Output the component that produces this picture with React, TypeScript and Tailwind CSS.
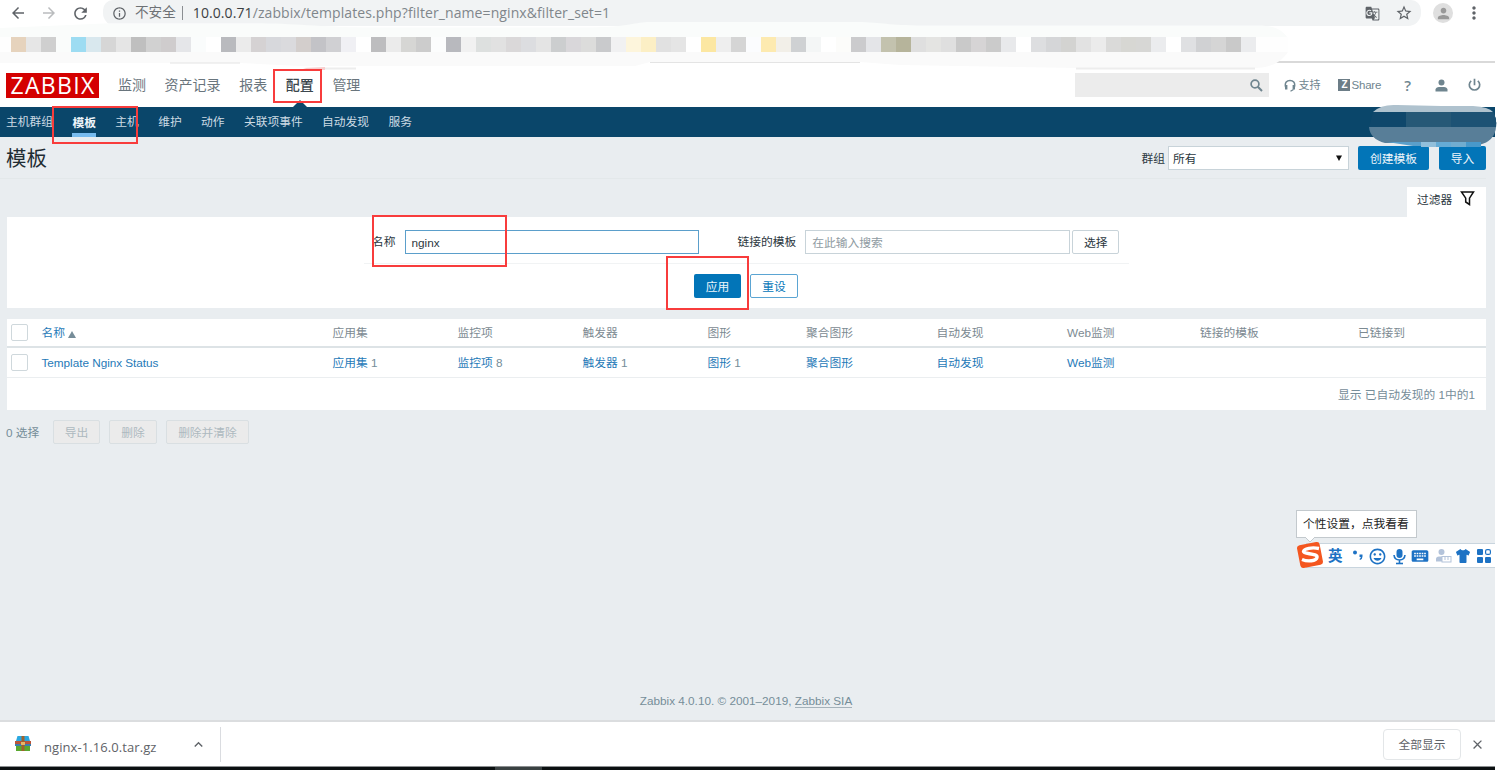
import type { ReactNode } from "react";
import {
  MdArrowBack,
  MdArrowForward,
  MdClose,
  MdExpandLess,
  MdGTranslate,
  MdInfoOutline,
  MdKeyboard,
  MdMic,
  MdMoreVert,
  MdOutlineInsertEmoticon,
  MdPerson,
  MdRefresh,
  MdStarBorder,
} from "react-icons/md";
import { FaTshirt } from "react-icons/fa";

const bookmarkTiles = [
  "bg-[#e6d3bd]", "bg-[#e6e6e6]", "bg-[#cfcfcf]", "bg-[#fafcfb]", "bg-[#9ddcf2]", "bg-[#d9e8ee]",
  "bg-[#d6d6d6]", "bg-[#e5e5e5]", "bg-[#bfbfbf]", "bg-[#d1d1d1]", "bg-[#cfcccd]", "bg-[#e5e6e9]",
  "bg-[#fafcfc]", "bg-white", "bg-[#b9babe]", "bg-[#ebebeb]", "bg-[#d5d2d3]", "bg-[#d7d8dc]",
  "bg-[#dadadd]", "bg-[#d3cecc]", "bg-[#c3c3c7]", "bg-[#d0d0d3]", "bg-[#f0f0f4]", "bg-white",
  "bg-[#bdbdbf]", "bg-[#ebebeb]", "bg-[#d6d6d4]", "bg-[#cccccc]", "bg-[#fcfdfd]", "bg-[#b8b9be]",
  "bg-[#f1f1f1]", "bg-[#dde0df]", "bg-[#e1e1e1]", "bg-[#dad8d9]", "bg-[#dcdde0]", "bg-[#e4e4e4]",
  "bg-[#cccecf]", "bg-[#d9d7da]", "bg-[#dcdcdb]", "bg-[#c9cacc]", "bg-[#f1f1f2]", "bg-[#fdf5dc]",
  "bg-[#fcefc5]", "bg-[#e1e1e1]", "bg-[#e5e5e5]", "bg-white", "bg-[#fce7a2]", "bg-[#eeeeee]",
  "bg-[#d5d5d5]", "bg-[#fbfcfe]", "bg-[#fdeab0]", "bg-[#f2efe8]", "bg-[#cfd1d3]", "bg-[#f4f6f6]",
  "bg-white", "bg-[#fcfcfa]", "bg-[#cbcbcd]", "bg-[#e4e5e8]", "bg-[#c3c2ae]", "bg-[#b6b49b]",
  "bg-[#dfdfdf]", "bg-[#e4e4e2]", "bg-[#dfdfdf]", "bg-[#c9c9c9]", "bg-[#d6d4d5]", "bg-[#cbcbcb]",
  "bg-[#e8e9eb]", "bg-white", "bg-[#dddee0]", "bg-[#d5d6d8]", "bg-[#d3d3d1]", "bg-[#e2e2e2]",
  "bg-[#ebebeb]", "bg-[#dadad9]", "bg-[#d7d7d3]", "bg-[#d7d7d5]", "bg-[#ebecee]", "bg-white",
  "bg-[#dfe0e2]", "bg-[#d0d1d3]", "bg-[#d5d5d5]", "bg-[#c9c9c9]", "bg-[#ebecee]",
];

const mainMenu = ["监测", "资产记录", "报表", "配置", "管理"];
const subMenu = ["主机群组", "模板", "主机", "维护", "动作", "关联项事件", "自动发现", "服务"];

const columns = ["应用集", "监控项", "触发器", "图形", "聚合图形", "自动发现", "Web监测", "链接的模板", "已链接到"];
const cells: { label: string; count?: number }[] = [
  { label: "应用集", count: 1 },
  { label: "监控项", count: 8 },
  { label: "触发器", count: 1 },
  { label: "图形", count: 1 },
  { label: "聚合图形" },
  { label: "自动发现" },
  { label: "Web监测" },
];

const rowGrid =
  "grid grid-cols-[34.5px_291px_125px_125px_125px_98.5px_130.5px_130.5px_133px_158px_1fr] items-center";

function Checkbox() {
  return <span className="ml-1 block h-[17px] w-[17px] rounded-[2px] border border-[#cfd8dc] bg-white" />;
}

function BrowserBar() {
  return (
    <div className="flex h-[26px] items-center text-[#5f6368]">
      <MdArrowBack className="ml-[9px] h-[18px] w-[18px]" />
      <MdArrowForward className="ml-[13px] h-[18px] w-[18px] text-[#babcbe]" />
      <MdRefresh className="ml-[13px] h-[19px] w-[19px]" />
      <div className="ml-[13px] flex h-[26px] w-[1318px] items-center rounded-b-[13px] rounded-t-[10px] bg-[#f1f3f4]">
        <MdInfoOutline className="ml-[9px] h-[15px] w-[15px]" />
        <span className="ml-2 text-[13.6px] leading-[26px] text-[#6d7175]">不安全</span>
        <span className="ml-[6px] h-[14px] w-px bg-[#8b8e92]" />
        <span className="ml-[10px] whitespace-nowrap font-['Open_Sans','Noto_Sans',sans-serif] text-[14px] leading-[26px] tracking-[0.09px] text-[#80868b]">
          <span className="text-[#3c4043]">10.0.0.71</span>/zabbix/templates.php?filter_name=nginx&amp;filter_set=1
        </span>
        <MdGTranslate className="ml-auto h-[15px] w-[15px]" />
        <MdStarBorder className="ml-[15px] mr-[8px] h-[18px] w-[18px]" />
      </div>
      <span className="ml-3 flex h-5 w-5 items-center justify-center rounded-full bg-[#dfdfdf] text-[#999]">
        <MdPerson className="h-[17px] w-[17px]" />
      </span>
      <MdMoreVert className="ml-[11px] h-[20px] w-[20px]" />
    </div>
  );
}

function BookmarkBar() {
  return (
    <div className="relative h-[37px]">
      <svg className="absolute left-0 top-[-4px]" width="1500" height="50" viewBox="0 22 1500 50">
        <path d="M1260 62H1495" stroke="#d9d9d9" strokeWidth="2" />
        <path
          d="M110 23.3H250C290 23 320 27 365 27.5H590C630 27 635 22 650 22H862C885 23 890 25.5 930 25.5H1255C1275 25 1282 30 1288 38H0V28Z"
          fill="#fafcfb"
        />
        <path d="M0 37H1288V52H0Z" fill="#fefefe" />
        <path d="M0 52H1288C1280 64 1268 68 1255 68H1076L900 65L860 62H650L635 66H300L240 63H0Z" fill="#fafafa" />
        <path d="M170 63H240M650 62.5H860" stroke="#e4e4e4" />
        <path d="M303 68L325 67V70H310Z" fill="#f6cfcf" />
        <path d="M325 68.5H356M1076 68.5H1255" stroke="#ededed" strokeWidth="2" />
      </svg>
      <div className="relative ml-[11px] flex pt-[11px]">
        {bookmarkTiles.map((tile, i) => (
          <span key={i} className={`h-[15px] w-[15px] shrink-0 ${tile}`} />
        ))}
      </div>
    </div>
  );
}

function Header() {
  return (
    <header className="flex h-[44px] w-[1495px] items-center text-[#6f858f]">
      <div className="ml-[6px] flex h-[25px] w-[93px] items-center justify-center bg-[#d40000] pl-px font-['Open_Sans','Noto_Sans',sans-serif] text-[23px] leading-[25px] tracking-[1.3px] text-white">
        ZABBIX
      </div>
      <nav className="ml-[19px] flex gap-[18.6px] text-[14px] leading-[20px]">
        {mainMenu.map((item) => (
          <span key={item} className={item === "配置" ? "font-medium text-[#3c474e]" : "text-[#69757d]"}>
            {item}
          </span>
        ))}
      </nav>
      <div className="ml-auto flex h-[24px] w-[194px] items-center justify-end bg-[#ececec] pr-[6px]">
        <svg width="13" height="13" viewBox="0 0 13 13" fill="none" stroke="currentColor">
          <circle cx="5" cy="5" r="3.9" strokeWidth="1.7" />
          <path d="M7.8 7.8L12 12" strokeWidth="2" />
        </svg>
      </div>
      <div className="ml-[15px] flex w-[37px] items-center gap-[2px] text-[11px]">
        <svg width="12" height="13" viewBox="0 0 12 13" fill="none" stroke="currentColor" className="shrink-0">
          <path d="M1.6 8C.4 3.6 3 1.4 6 1.4S11.600 3.600 10.400 8" strokeWidth="1.5" />
          <path d="M2.200 6v4.500M9.800 6v4.500" strokeWidth="2.400" />
          <path d="M9.5 10.500L6.500 12.200" strokeWidth="1.300" />
        </svg>
        <span className="whitespace-nowrap">支持</span>
      </div>
      <div className="ml-[17px] flex items-center gap-px text-[11.5px]">
        <span className="flex h-3 w-3 items-center justify-center bg-[#6c7d87] text-[10px] font-bold leading-3 text-white">Z</span>
        <span className="tracking-[-0.2px]">Share</span>
      </div>
      <span className="ml-[23px] font-['Open_Sans','Noto_Sans',sans-serif] text-[15px] font-semibold leading-[20px]">?</span>
      <svg className="ml-[24px]" width="13" height="13" viewBox="0 0 13 13" fill="currentColor">
        <circle cx="6.500" cy="3.500" r="3" />
        <path d="M0.500 12.500V10.500Q1 8 4 8H9Q12 8 12.500 10.500V12.500Z" />
      </svg>
      <svg className="ml-[20px] mr-[14px]" width="13" height="14" viewBox="0 0 13 14" fill="none" stroke="currentColor" strokeWidth="1.7">
        <path d="M6.5.8v6.4M3.2 2.8a5.2 5.2 0 1 0 6.600 0" />
      </svg>
    </header>
  );
}

function SubNav() {
  return (
    <div className="relative flex h-[30px] w-[1495px] items-center gap-[19.4px] bg-[#0a466a] pl-[6px] leading-[30px] text-[#cddbe4]">
      <svg className="absolute left-[292px] top-[-7px]" width="16" height="8" viewBox="0 0 16 8">
        <path d="M8 0L16 8H0Z" fill="#0a466a" />
      </svg>
      {subMenu.map((item) =>
        item === "模板" ? (
          <span key={item} className="h-[29px] border-b-4 border-[#78bbee] font-bold leading-[29px] text-[#eef5fa]">
            {item}
          </span>
        ) : (
          <span key={item}>{item}</span>
        )
      )}
      {/* pixelated server name */}
      <svg className="absolute left-[1369px] top-[-4px]" width="128" height="45" viewBox="0 0 128 45">
        <path d="M4 9Q12 1 28 2L72 3H104Q120 4 124 9Z" fill="#afc2ce" />
        <path d="M4 9H124Q128 16 127 24H0Z" fill="#0f476b" />
        <path d="M37 9H124Q128 16 127 24H37Z" fill="#265876" />
        <path d="M82 9H124Q128 16 127 24H82Z" fill="#1d5274" />
        <path d="M0 24H127Q126 38 110 42L112 39H37V40H16Q1 36 0 24Z" fill="#587e98" />
        <path d="M18 39H52V43H44Z" fill="#5a9fca" />
        <path d="M52 39H67V44H52Z" fill="#91bfdb" />
        <path d="M67 39H82V44H67Z" fill="#65abd5" />
        <path d="M82 39H97V44H82Z" fill="#71add0" />
        <path d="M97 39H112V44H97Z" fill="#4999ca" />
      </svg>
    </div>
  );
}

function PrimaryButton({ children, className }: { children: ReactNode; className: string }) {
  return (
    <button className={`h-[24px] rounded-[2px] bg-[#0275b8] leading-[23px] text-[#eef6fb] ${className}`}>{children}</button>
  );
}

function TitleRow() {
  return (
    <div className="mr-[9px] flex h-[42px] items-center border-b border-[#e3e8ea] pt-px">
      <h1 className="ml-[6px] text-[20.5px] leading-[40px] text-[#1f2c33]">
        <span className="relative top-px">模板</span>
      </h1>
      <span className="ml-auto pt-[2px]">群组</span>
      <div className="ml-[3px] flex h-[24px] w-[181px] items-center justify-between border border-[#c8d3d9] bg-white pl-[4px] pr-[6px]">
        <span className="pt-[2px]">所有</span>
        <svg width="6" height="6" viewBox="0 0 6 6">
          <path d="M0 .5H6L3 6Z" fill="#111" />
        </svg>
      </div>
      <PrimaryButton className="ml-[9px] w-[71px]">创建模板</PrimaryButton>
      <PrimaryButton className="ml-[10px] w-[47px]">导入</PrimaryButton>
    </div>
  );
}

function Filter() {
  return (
    <section className="ml-[7px] w-[1479px]">
      <div className="mt-2 flex justify-end">
        <div className="flex h-[30px] w-[79px] items-center bg-white pl-[10px]">
          <span className="mt-[-5px]">过滤器</span>
          <svg className="ml-[8px] mt-[-8px]" width="15" height="15" viewBox="0 0 15 15" fill="none" stroke="#111" strokeWidth="1.5">
            <path d="M1.500 1H13.500L9.5 7.2V13.5L5.7 11V7.2Z" />
          </svg>
        </div>
      </div>
      <div className="h-[91px] bg-white">
        <div className="mx-[357px] flex h-[47px] items-center border-b border-[#f1f3f4] pl-[8px] pt-[3px]">
          <span>名称</span>
          <div className="ml-[9px] h-[24px] w-[294px] border border-[#5b9fcb] bg-white pl-[6px] leading-[23px]">nginx</div>
          <span className="ml-[39px] whitespace-nowrap">链接的模板</span>
          <div className="ml-[9px] h-[24px] w-[265px] shrink-0 border border-[#c8d3d9] bg-white pl-[6px] leading-[23px] text-[#8f9ba2]">
            在此输入搜索
          </div>
          <button className="ml-[2px] h-[24px] w-[47px] shrink-0 rounded-[2px] border border-[#c8d3d9] leading-[23px]">选择</button>
        </div>
        <div className="flex gap-[9px] pl-[687px] pt-[10px]">
          <PrimaryButton className="w-[47px]">应用</PrimaryButton>
          <button className="h-[24px] w-[48px] rounded-[2px] border border-[#5ba5d3] leading-[23px] text-[#0275b8]">重设</button>
        </div>
      </div>
    </section>
  );
}

function TemplateTable() {
  return (
    <section className="ml-[7px] mt-[11px] h-[91px] w-[1479px] bg-white">
      <div className={`${rowGrid} h-[29px] border-b-2 border-[#dde3e6] text-[#7c8a92]`}>
        <Checkbox />
        <span className="flex items-center gap-1 text-[#1f7ab8]">
          名称
          <svg width="8" height="7" viewBox="0 0 8 7" className="ml-[-1px] mt-1">
            <path d="M4 0L8 7H0Z" fill="#768d99" />
          </svg>
        </span>
        {columns.map((c) => (
          <span key={c}>{c}</span>
        ))}
      </div>
      <div className={`${rowGrid} h-[30px] border-b border-[#ebeef0] text-[#1f7ab8]`}>
        <Checkbox />
        <span className="tracking-[-0.03px]">Template Nginx Status</span>
        {cells.map((c) => (
          <span key={c.label}>
            {c.label}
            {c.count && <span className="text-[#768d99]"> {c.count}</span>}
          </span>
        ))}
      </div>
      <div className="pr-[11px] text-right leading-[33px] text-[#768d99]">显示 已自动发现的 1中的1</div>
    </section>
  );
}

function ActionBar() {
  const disabled = "h-[24px] rounded-[2px] border border-[#d9dfe2] bg-[#ebebeb] leading-[23px] text-[#adb9bf]";
  return (
    <div className="ml-[6px] mt-[10px] flex h-[24px] items-center">
      <span className="w-[47px] pt-px text-[#768d99]">0 选择</span>
      <button className={`${disabled} w-[47px]`}>导出</button>
      <button className={`${disabled} ml-[9px] w-[48px]`}>删除</button>
      <button className={`${disabled} ml-[9px] w-[83px]`}>删除并清除</button>
    </div>
  );
}

// Floating input-method bar with its hint bubble
function ImeBar() {
  return (
    <div className="absolute left-[1296px] top-[510px] w-[199px] overflow-hidden text-[#1d72c4]">
      <div className="h-[28px] w-[121px] border border-[#c3c9cd] bg-white pl-[6px] leading-[25px] text-[#222]">
        个性设置，点我看看
      </div>
      <svg className="absolute left-[9px] top-[27px]" width="10" height="6" viewBox="0 0 10 6">
        <path d="M0 0L5 5L10 0" fill="#fff" stroke="#c3c9cd" />
      </svg>
      <div className="ml-[10px] mt-[5px] flex h-[25px] items-center border-y border-[#c9d5de] bg-white pl-[22px] pt-px">
        <span className="w-[15px] text-[14.5px] font-bold leading-[22px]">英</span>
        <svg className="ml-[9px] mt-[-2px]" width="12" height="12" viewBox="0 0 12 12" fill="currentColor">
          <circle cx="3" cy="3.5" r="2" />
          <path d="M7.5 5.5H10.5V7.5Q10.5 10 8 11L7.5 10Q9 9 8.8 8H7.5Z" />
        </svg>
        <MdOutlineInsertEmoticon className="ml-[4px] h-[19px] w-[19px] shrink-0" />
        <svg className="ml-[6px] shrink-0" width="13" height="17" viewBox="0 0 13 17" fill="none" stroke="currentColor">
          <rect x="3.500" y="1" width="6" height="9" rx="3" fill="currentColor" stroke="none" />
          <path d="M1 7Q1.500 12 6.500 12T12 7M6.500 12V15" strokeWidth="1.600" />
          <path d="M3 15.500H10" strokeWidth="1.600" />
        </svg>
        <MdKeyboard className="ml-[4px] h-[20px] w-[20px] shrink-0" />
        <svg className="ml-[6px] shrink-0" width="16" height="16" viewBox="0 0 16 16">
          <circle cx="5.5" cy="4" r="3" fill="#b3c3da" />
          <path d="M0 13.5V11Q0 8.5 3 8.5H9V13.5Z" fill="#b3c3da" />
          <rect x="6" y="8.5" width="9" height="5.5" fill="#fff" stroke="#b3c3da" />
          <path d="M9 9V12M12 9V12" stroke="#b3c3da" />
        </svg>
        <FaTshirt className="ml-[4px] h-[14px] w-[14px] shrink-0" preserveAspectRatio="none" />
        <svg className="ml-[7px] shrink-0" width="14" height="14" viewBox="0 0 14 14" fill="currentColor">
          <rect width="6" height="6" rx="1" />
          <rect y="8" width="6" height="6" rx="1" />
          <rect x="8" y="8" width="6" height="6" rx="1" />
          <rect x="8.6" y=".6" width="4.8" height="4.8" rx="1.5" fill="none" stroke="currentColor" strokeWidth="1.2" />
        </svg>
      </div>
      <svg className="absolute left-0 top-[31px]" width="29" height="28" viewBox="0 0 29 28">
        <rect x="2.500" y="2.500" width="23" height="23" rx="3" fill="#f4561f" transform="rotate(-11 14 14)" />
        <path
          d="M23 7.500C16 6 8 7.500 7.500 10.500C7.500 13.500 22 12 21 16.500C20 20 12 21 6 18.500"
          fill="none"
          stroke="#fff"
          strokeWidth="3.4"
        />
      </svg>
    </div>
  );
}

function DownloadShelf() {
  return (
    <div className="flex h-[46px] w-[1495px] items-center border-t-2 border-[#dbdddf] bg-white text-[#5f6368]">
      <svg className="ml-[15px] mt-[-2px]" width="16" height="15" viewBox="0 0 16 15">
        <path d="M2.500 0H13.500L15 5H1Z" fill="#2ba8e0" />
        <path d="M0 5H16V10H0Z" fill="#b8553a" />
        <path d="M0 8H16V10H0Z" fill="#3a7fae" />
        <path d="M1 10H15V15H1Z" fill="#59a82f" />
        <path d="M6.500 0H9.500V15H6.500Z" fill="#a0622d" />
        <path d="M6 6H10V9H6Z" fill="#e4b667" />
      </svg>
      <span className="ml-[13px] mt-[5px] w-[113px] whitespace-nowrap font-['Open_Sans','Noto_Sans',sans-serif] text-[13px] tracking-[0.08px]">
        nginx-1.16.0.tar.gz
      </span>
      <MdExpandLess className="ml-[33px] h-[17px] w-[17px]" />
      <span className="ml-[13px] h-[35px] w-px bg-[#dadce0]" />
      <button className="ml-auto h-[31px] w-[78px] rounded-[4px] border border-[#e3e6e8] text-[11.75px] leading-[29px]">
        全部显示
      </button>
      <MdClose className="ml-[9px] mr-[10px] h-[15px] w-[15px]" />
    </div>
  );
}

export default function App() {
  return (
    <div className="relative h-[770px] w-[1500px] overflow-hidden bg-white font-['Liberation_Sans','Noto_Sans_CJK_SC',sans-serif] text-[11.75px] leading-[18px] text-[#2b3740]">
      <BrowserBar />
      <BookmarkBar />
      <Header />
      <SubNav />
      <main className="flex h-[583px] w-[1495px] flex-col bg-[#e9edf0]">
        <TitleRow />
        <Filter />
        <TemplateTable />
        <ActionBar />
        <footer className="mb-[10px] mt-auto pr-[3px] text-center text-[#768d99]">
          Zabbix 4.0.10. © 2001–2019, <span className="border-b border-[#a5b2ba]">Zabbix SIA</span>
        </footer>
      </main>
      <DownloadShelf />
      <div className="h-[4px] w-[1495px] border-t border-[#8c8f91] bg-[#0b1011]">
        <div className="ml-[495px] h-[3px] w-[47px] bg-[#3a4142]" />
      </div>

      <ImeBar />

      {/* red callouts */}
      <div className="absolute left-[273px] top-[69px] h-[34px] w-[49px] border-2 border-[#f83c3c]" />
      <div className="absolute left-[52px] top-[106px] h-[38px] w-[86px] border-2 border-[#f83c3c]" />
      <div className="absolute left-[372px] top-[215px] h-[52px] w-[135px] border-2 border-[#f83c3c]" />
      <div className="absolute left-[666px] top-[256px] h-[54px] w-[83px] border-2 border-[#f83c3c]" />
    </div>
  );
}
